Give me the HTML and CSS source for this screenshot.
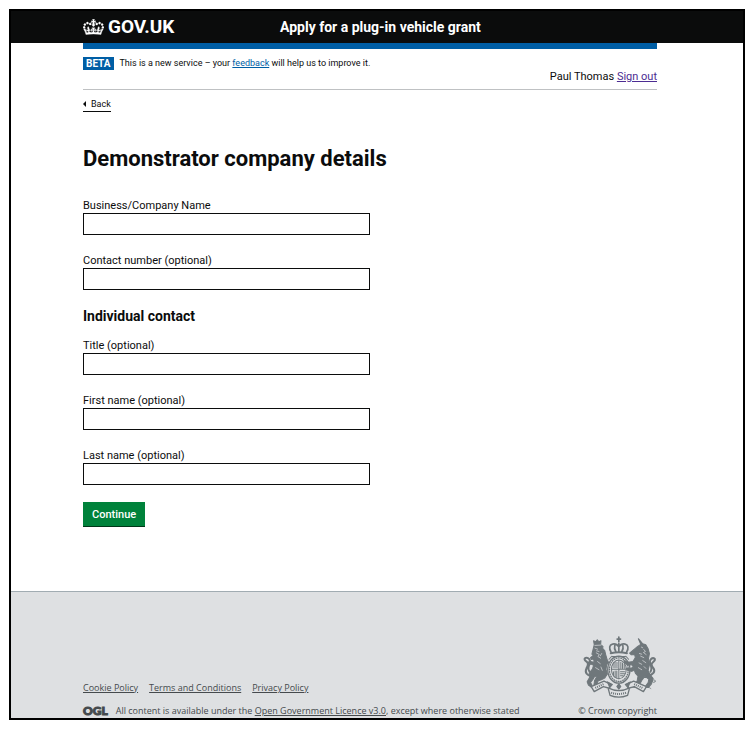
FILE: index.html
```html
<!DOCTYPE html>
<html lang="en">
<head>
<meta charset="utf-8">
<title>Demonstrator company details</title>
<link rel="stylesheet" href="styles.css">
</head>
<body>
<div class="frame">
  <header class="header">
    <div class="container header-row">
      <a class="logo" href="#">
        <svg class="crown" viewBox="0 0 132 97" aria-hidden="true"><path fill="currentColor" stroke="currentColor" stroke-width="2" fill-rule="evenodd" d="M25 30.2c3.5 1.5 7.7-.2 9.1-3.7 1.5-3.6-.2-7.8-3.9-9.2-3.6-1.4-7.6.3-9.1 3.9-1.4 3.5.3 7.5 3.9 9zM9 39.5c3.6 1.5 7.8-.2 9.2-3.7 1.5-3.6-.2-7.8-3.9-9.1-3.6-1.5-7.6.2-9.1 3.8-1.4 3.5.3 7.5 3.8 9zM4.4 57.2c3.5 1.5 7.7-.2 9.1-3.8 1.5-3.6-.2-7.7-3.9-9.1-3.5-1.5-7.6.3-9.1 3.8-1.4 3.5.3 7.6 3.9 9.1zm38.3-21.4c3.5 1.5 7.7-.2 9.1-3.8 1.5-3.6-.2-7.7-3.9-9.1-3.6-1.5-7.6.3-9.1 3.8-1.3 3.6.4 7.7 3.9 9.1zm64.4-5.6c-3.6 1.5-7.8-.2-9.1-3.7-1.5-3.6.2-7.8 3.8-9.2 3.6-1.4 7.7.3 9.2 3.9 1.3 3.5-.4 7.5-3.9 9zm15.9 9.3c-3.6 1.5-7.7-.2-9.1-3.7-1.5-3.6.2-7.8 3.7-9.1 3.6-1.5 7.7.2 9.2 3.8 1.5 3.5-.3 7.5-3.8 9zm4.7 17.7c-3.6 1.5-7.8-.2-9.2-3.8-1.5-3.6.2-7.7 3.9-9.1 3.6-1.5 7.7.3 9.2 3.8 1.3 3.5-.4 7.6-3.9 9.1zM89.3 35.8c-3.6 1.5-7.8-.2-9.2-3.8-1.4-3.6.2-7.7 3.9-9.1 3.6-1.5 7.7.3 9.2 3.8 1.4 3.6-.3 7.7-3.9 9.1zM69.7 17.7l8.9 4.7V9.3l-8.9 2.8c-.2-.3-.5-.6-.9-.9L72.4 0H59.6l3.5 11.2c-.3.3-.6.5-.9.9l-8.8-2.8v13.1l8.8-4.7c.3.3.6.7.9.9l-5 15.4v.1c-.2.8-.4 1.6-.4 2.4 0 4.1 3.1 7.5 7 8.1h.2c.3 0 .7.1 1 .1.4 0 .7 0 1-.1h.2c4-.6 7.1-4.1 7.1-8.1 0-.8-.1-1.7-.4-2.4V34l-5.1-15.4c.4-.2.7-.6 1-.9zM66 92.8c16.9 0 32.8 1.1 47.1 3.2 4-16.9 8.9-26.7 14-33.5l-9.6-3.4c1 4.9 1.1 7.2 0 10.2-1.5-1.4-3-4.3-4.2-8.7L108.6 76c2.8-2 5-3.2 7.5-3.3-4.4 9.4-10 11.9-13.6 11.2-4.3-.8-6.3-4.6-5.6-7.9 1-4.7 5.7-5.9 8-.5 4.3-8.7-3-11.4-7.6-8.8 7.1-7.2 7.9-13.5 2.1-21.1-8 6.1-8.1 12.3-4.5 20.8-4.7-5.4-12.1-2.5-9.5 6.2 3.4-5.2 7.9-2 7.2 3.1-.6 4.3-6.4 7.8-13.5 7.2-10.3-.9-10.9-8-11.2-13.8 2.5-.5 7.1 1.8 11 7.3L80.2 60c-4.1 4.4-8 5.3-12.3 5.4 1.4-4.4 8-11.6 8-11.6H55.5s6.4 7.2 7.9 11.6c-4.2-.1-8-1-12.3-5.4l1.4 16.4c3.9-5.5 8.5-7.7 10.9-7.3-.3 5.8-.9 12.8-11.1 13.8-7.2.6-12.9-2.9-13.5-7.2-.7-5 3.8-8.3 7.1-3.1 2.7-8.7-4.6-11.6-9.4-6.2 3.7-8.5 3.6-14.7-4.6-20.8-5.8 7.6-5 13.9 2.2 21.1-4.7-2.6-11.9.1-7.7 8.8 2.3-5.5 7.1-4.2 8.1.5.7 3.3-1.3 7.1-5.7 7.9-3.5.7-9-1.8-13.5-11.2 2.5.1 4.7 1.3 7.5 3.3l-4.7-15.4c-1.2 4.4-2.7 7.2-4.3 8.7-1.1-3-.9-5.3 0-10.2l-9.5 3.4c5 6.9 9.9 16.7 14 33.5 14.8-2.1 30.8-3.2 47.7-3.2z"/></svg>
        <span>GOV.UK</span>
      </a>
      <a class="service-name" href="#">Apply for a plug-in vehicle grant</a>
    </div>
  </header>

  <div class="container page">
    <div class="phase-banner">
      <p class="phase"><strong class="tag">BETA</strong><span>This is a new service – your <a href="#">feedback</a> will help us to improve it.</span></p>
      <p class="user">Paul Thomas <a href="#">Sign out</a></p>
    </div>
    <a class="back" href="#">Back</a>
    <main>
      <h1>Demonstrator company details</h1>
      <form>
        <div class="field"><label for="company">Business/Company Name</label><input id="company" type="text"></div>
        <div class="field"><label for="phone">Contact number (optional)</label><input id="phone" type="text"></div>
        <h2>Individual contact</h2>
        <div class="field"><label for="title">Title (optional)</label><input id="title" type="text"></div>
        <div class="field"><label for="first">First name (optional)</label><input id="first" type="text"></div>
        <div class="field"><label for="last">Last name (optional)</label><input id="last" type="text"></div>
        <button type="button">Continue</button>
      </form>
    </main>
  </div>

  <footer class="footer">
    <div class="container footer-row">
      <div>
        <nav class="footer-links"><a href="#">Cookie Policy</a><a href="#">Terms and Conditions</a><a href="#">Privacy Policy</a></nav>
        <p class="licence"><span class="ogl">OGL</span><span>All content is available under the <a href="#">Open Government Licence v3.0</a>, except where otherwise stated</span></p>
      </div>
      <a class="copyright" href="#">
        <svg class="arms" viewBox="40 34 222 184" aria-hidden="true">
          <g fill="none" stroke="#6f777b" stroke-linecap="round" stroke-linejoin="round">
            <!-- crown -->
            <path stroke-width="5" d="M149 37v13M144 43h10M126 82c-7-12-5-22 4-24 8-2 15 2 19 8 4-6 11-10 19-8 9 2 11 12 4 24M149 56v24M137 62c-2 7 0 13 3 18M161 62c2 7 0 13-3 18"/>
            <path stroke-width="6" d="M125 85q24-6 48 0"/>
            <!-- shield and garter -->
            <ellipse cx="149" cy="134" rx="33" ry="40" stroke-width="4"/>
            <ellipse cx="149" cy="134" rx="28" ry="35" stroke-width="4" stroke-dasharray="2 5"/>
            <ellipse cx="149" cy="133" rx="22" ry="28" stroke-width="3"/>
            <path stroke-width="3" d="M149 106v55M127 133h44M132 114h13M131 120h14M132 126h13M155 112v18M160 114v16M165 118v12M133 140v12M138 138v19M143 138v21M154 140h12M154 146h12M154 152h8M120 103l8-9M178 103l-8-9M130 95h38"/>
            <!-- lion: maned head, body, forelegs and hind legs -->
            <path fill="#6f777b" stroke-width="3" d="M76 60l-2-12 6 3 5-6 5 6 6-3-1 12 7 5-1 6 6 6 3 12 4 14 5 10-6 6-2 14 4 14-8 12-10 5-9 3-4 8 8 5 2 7-10 1-9-8 2-14 6-10-5-3-6 10-7 9 5 9-3 5-8-6-4-10 8-14-2-11 10-14 3-10-7-4-9 1-2-6 8-2 12 2-2-10-7 2-2-6 8-6-4-4z"/>
            <path stroke-width="6" d="M70 154c-15-1-23-12-17-24 5-9 7-15 1-19-7-5-9-9-4-12 8-3 16 5 13 16-4 8-8 16-1 25"/>
            <path stroke="#dee0e2" stroke-width="2" d="M78 62l18-1M78 70l8 3M82 84l9 5-4 6 8 5M86 110l8 6M80 128l10 6M96 126l4 10M83 78l7 2M98 86l-4 7"/>
            <!-- unicorn: horn, neck, mane, forelegs and hind legs -->
            <path fill="#6f777b" stroke-width="3" d="M205 65l9-6-7-17 13 15 9 3 7 12 4 14-3 15 3 18-4 18 6 12 9 11-5 16-9 11-11-1 10-14 2-10-12-8-9 12-8 15-12 5-11-1 9-10 8-6 3-16-8-9-3-8-8 3-12-3-4-6 10 1 11-4-4-8-12 2-10-7-2-7 13 5 14-2 7-12-2-9-10 1-5-5z"/>
            <path stroke-width="6" d="M235 153c16-4 23-13 17-23-7-8-8-13-1-19 6-5 7-9 2-11-8-2-14 7-11 16 4 9 7 15 1 24"/>
            <path stroke="#dee0e2" stroke-width="2" d="M216 67l4 2M223 74l5 6-6 3 8 6M214 94l9 4M220 107l9 6M209 114l8 4M224 125l5 5M210 86l7 2M207 128l10 6"/>
            <path stroke-width="2" d="M238 176l9-8M244 190l-8-5"/>
            <circle cx="253" cy="168" r="4" stroke-width="2"/>
            <!-- motto ribbon -->
            <path fill="#dee0e2" stroke-width="4" d="M67 184l38-16 18 8-2 13-18-5-27 15zM231 184l-38-16-18 8 2 13 18-5 27 15zM117 188q32 16 64 0l-6 22q-26 11-52 0z"/>
            <path stroke-width="6" stroke-dasharray="3 3" stroke-linecap="butt" d="M79 188l26-12M219 188l-26-12M126 202q23 8 46 0"/>
            <path fill="#6f777b" stroke-width="3" d="M149 176l6 8-6 8-6-8zM115 170l15 8-8 9zM183 170l-15 8 8 9z"/>
          </g>
        </svg>
        <span>© Crown copyright</span>
      </a>
    </div>
  </footer>
</div>
</body>
</html>
```
FILE: styles.css
```css
* { box-sizing: border-box; }
body {
  margin: 0;
  padding: 9px 9px 14px;
  background: #fff;
  color: #0b0c0c;
  font: 11px/14px Roboto, sans-serif;
}
p, h1, h2 { margin: 0; }
.frame {
  display: flex;
  flex-direction: column;
  min-height: calc(100vh - 23px);
  border: 2px solid #000;
}
.container { margin: 0 86px 0 72px; }
.header { background: #0b0c0c; }
.header-row {
  display: grid;
  grid-template-columns: 197px 1fr;
  align-items: center;
  height: 32px;
}
.header a { color: #fff; text-decoration: none; }
.logo {
  display: flex;
  align-items: center;
  gap: 4px;
  font-size: 19px;
  font-weight: 700;
  line-height: 20px;
}
.crown { width: 21px; height: 16px; }
.service-name { font-size: 14px; font-weight: 700; }
.page { flex: 1; }
.phase-banner {
  border-top: 6px solid #005ea5;
  border-bottom: 1px solid #bfc1c3;
  padding-top: 7px;
}
.phase { display: flex; align-items: center; gap: 6px; font-size: 9px; }
.phase a { color: #005ea5; }
.tag {
  padding: 0 3px;
  background: #005ea5;
  color: #fff;
  font-size: 10px;
  line-height: 13px;
}
.user { text-align: right; padding-bottom: 5px; }
.user a { color: #4c2c92; }
.back {
  display: inline-flex;
  align-items: center;
  gap: 5px;
  margin-top: 7px;
  border-bottom: 1px solid #0b0c0c;
  color: #0b0c0c;
  font-size: 9px;
  text-decoration: none;
}
.back::before {
  content: "";
  border: 3px solid transparent;
  border-right-color: #0b0c0c;
  border-left: 0;
}
h1 { margin: 33px 0 26px; font-size: 22px; line-height: 28px; }
h2 { margin: 0 0 16px; font-size: 14px; line-height: 14px; }
.field { margin-bottom: 19px; }
.field:last-of-type { margin-bottom: 17px; }
label { display: block; }
input {
  display: block;
  width: 50%;
  height: 22px;
  padding: 2px 4px;
  border: 1px solid #0b0c0c;
  border-radius: 0;
  font: inherit;
}
button {
  height: 25px;
  padding: 0 9px;
  border: 0;
  background: #00823b;
  box-shadow: inset 0 -1px #003618;
  color: #fff;
  font: 500 11px/14px Roboto, sans-serif;
}
.footer {
  padding: 44px 0 0;
  border-top: 1px solid #a1acb2;
  background: #dee0e2;
  color: #454a4d;
  font: 9px/14px "Open Sans", sans-serif;
}
.footer a { color: #454a4d; }
.footer-row { display: flex; justify-content: space-between; align-items: flex-end; }
.footer-links { display: flex; gap: 11px; margin-bottom: 9px; }
.licence { display: flex; align-items: center; gap: 8px; }
.ogl { font: 900 12px/14px Lato, sans-serif; -webkit-text-stroke: 1px; }
.footer .copyright { display: grid; justify-items: end; gap: 6px; text-decoration: none; }
.arms { width: 75px; height: 62px; }
```
